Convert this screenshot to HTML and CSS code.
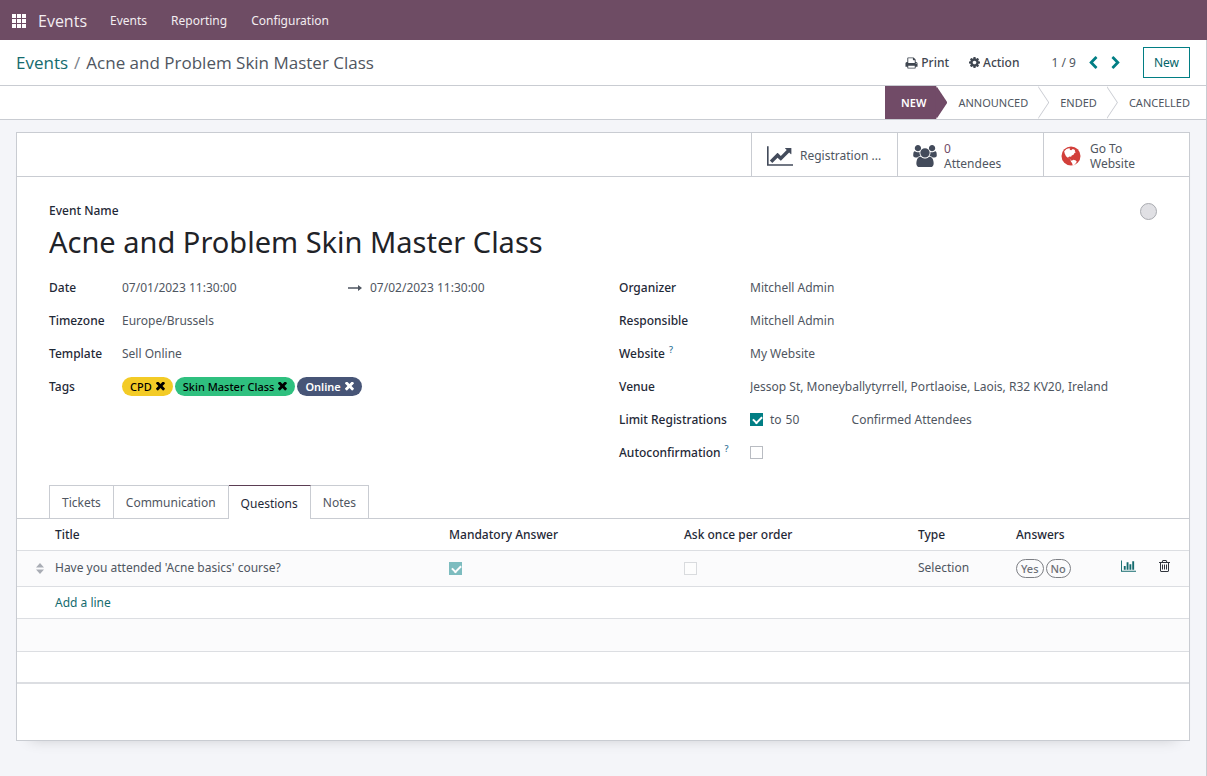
FILE: index.html
```html
<!DOCTYPE html>
<html lang="en">
<head>
<meta charset="utf-8">
<title>Events</title>
<link rel="stylesheet" href="styles.css">
</head>
<body>
<svg class="sprite" aria-hidden="true">
  <symbol id="times" viewBox="300 430 1200 1200"><path d="M1490 1322q0 40-28 68l-136 136q-28 28-68 28t-68-28l-294-294-294 294q-28 28-68 28t-68-28l-136-136q-28-28-28-68t28-68l294-294-294-294q-28-28-28-68t28-68l136-136q28-28 68-28t68 28l294 294 294-294q28-28 68-28t68 28l136 136q28 28 28 68t-28 68l-294 294 294 294q28 28 28 68z"/></symbol>
</svg>

<header class="navbar">
  <button class="apps" aria-label="Apps">
    <svg viewBox="0 0 14 14" width="14" height="14"><path d="M0 0h4v4H0zM5 0h4v4H5zM10 0h4v4h-4zM0 5h4v4H0zM5 5h4v4H5zM10 5h4v4h-4zM0 10h4v4H0zM5 10h4v4H5zM10 10h4v4h-4z"/></svg>
  </button>
  <a class="brand" href="#">Events</a>
  <nav class="menu">
    <a href="#">Events</a>
    <a href="#">Reporting</a>
    <a href="#">Configuration</a>
  </nav>
</header>

<div class="page">
  <div class="control-panel">
    <nav class="breadcrumb"><a href="#">Events</a><span class="slash">/</span><span>Acne and Problem Skin Master Class</span></nav>
    <div class="actions">
      <button class="action"><svg viewBox="0 128 1792 1536" width="13" height="12"><path d="M448 1536h896v-256h-896v256zm0-640h896v-384h-160q-40 0-68-28t-28-68v-160h-640v640zm1152 64q0-26-19-45t-45-19-45 19-19 45 19 45 45 19 45-19 19-45zm128 0v416q0 13-9.5 22.5t-22.5 9.5h-224v160q0 40-28 68t-68 28h-960q-40 0-68-28t-28-68v-160h-224q-13 0-22.5-9.5t-9.5-22.5v-416q0-79 56.5-135.5t135.5-56.5h64v-544q0-40 28-68t68-28h672q40 0 88 20t76 48l152 152q28 28 48 76t20 88v256h64q79 0 135.5 56.5t56.5 135.5z"/></svg>Print</button>
      <button class="action"><svg viewBox="128 128 1536 1536" width="11" height="11"><path d="M1152 896q0-106-75-181t-181-75-181 75-75 181 75 181 181 75 181-75 75-181zm512-109v222q0 12-8 23t-20 13l-185 28q-19 54-39 91 35 50 107 138 10 12 10 25t-9 23q-27 37-99 108t-94 71q-12 0-26-9l-138-108q-44 23-91 38-16 136-29 186-7 28-36 28h-222q-14 0-24.5-8.5t-11.5-21.5l-28-184q-49-16-90-37l-141 107q-10 9-25 9-14 0-25-11-126-114-165-168-7-10-7-23 0-12 8-23 15-21 51-66.5t54-70.5q-27-50-41-99l-183-27q-13-2-21-12.5t-8-23.5v-222q0-12 8-23t19-13l186-28q14-46 39-92-40-57-107-138-10-12-10-24 0-10 9-23 26-36 98.5-107.5t94.5-71.5q13 0 26 10l138 107q44-23 91-38 16-136 29-186 7-28 36-28h222q14 0 24.5 8.5t11.5 21.5l28 184q49 16 90 37l142-107q9-9 24-9 13 0 25 10 129 119 165 170 7 8 7 22 0 12-8 23-15 21-51 66.5t-54 70.5q26 50 41 98l183 28q13 2 21 12.5t8 23.5z"/></svg>Action</button>
    </div>
    <div class="pager">
      <span>1 / 9</span>
      <button aria-label="Previous"><svg viewBox="400 0 1100 1664" width="9" height="13"><path d="M1427 301l-531 531 531 531q19 19 19 45t-19 45l-166 166q-19 19-45 19t-45-19l-742-742q-19-19-19-45t19-45l742-742q19-19 45-19t45 19l166 166q19 19 19 45t-19 45z"/></svg></button>
      <button aria-label="Next"><svg viewBox="300 0 1100 1664" width="9" height="13"><path d="M1363 877l-742 742q-19 19-45 19t-45-19l-166-166q-19-19-19-45t19-45l531-531-531-531q-19-19-19-45t19-45l166-166q19-19 45-19t45 19l742 742q19 19 19 45t-19 45z"/></svg></button>
    </div>
    <button class="new">New</button>
  </div>

  <div class="statusbar">
    <button class="stage current">NEW</button>
    <button class="stage">ANNOUNCED</button>
    <button class="stage">ENDED</button>
    <button class="stage">CANCELLED</button>
  </div>

  <main class="sheet">
    <div class="stats">
      <button class="stat"><svg viewBox="0 128 2048 1536" width="26" height="20"><path d="M2048 1536v128h-2048v-1536h128v1408h1920zm-128-1248v435q0 21-19.5 29.5t-35.5-7.5l-121-121-633 633q-10 10-23 10t-23-10l-233-233-416 416-192-192 585-585q10-10 23-10t23 10l233 233 464-464-121-121q-16-16-7.5-35.5t29.5-19.5h435q14 0 23 9t9 23z"/></svg><span>Registration ...</span></button>
      <button class="stat"><svg viewBox="0 0 1920 1792" width="24" height="22"><path d="M593 896q-162 5-265 128h-134q-82 0-138-40.5t-56-118.5q0-353 124-353 6 0 43.5 21t97.5 42.5 119 21.5q67 0 133-23-5 37-5 66 0 139 81 256zm1071 637q0 120-73 189.5t-194 69.5h-874q-121 0-194-69.5t-73-189.5q0-53 3.5-103.5t14-109 26.5-108.5 43-97.5 62-81 85.5-53.5 111.5-20q10 0 43 21.5t73 48 107 48 135 21.5 135-21.5 107-48 73-48 43-21.5q61 0 111.5 20t85.5 53.5 62 81 43 97.5 26.5 108.5 14 109 3.5 103.5zm-1024-1277q0 106-75 181t-181 75-181-75-75-181 75-181 181-75 181 75 75 181zm704 384q0 159-112.5 271.5t-271.5 112.5-271.5-112.5-112.5-271.5 112.5-271.5 271.5-112.5 271.5 112.5 112.5 271.5zm576 225q0 78-56 118.5t-138 40.5h-134q-103-123-265-128 81-117 81-256 0-29-5-66 66 23 133 23 59 0 119-21.5t97.5-42.5 43.5-21q124 0 124 353zm-128-609q0 106-75 181t-181 75-181-75-75-181 75-181 181-75 181 75 75 181z"/></svg><span><span class="count">0</span><br>Attendees</span></button>
      <button class="stat"><svg class="globe" viewBox="0 0 20 20" width="20" height="20"><circle cx="10" cy="10" r="9.5"/><path class="land" d="M3.200 5.200 5.500 3 8 2.200l1.300.6L8.600 3.800l1.600.4L11.800 3l2.200 1-.2 1.300 1 .9-1.300.8-1 1.700-1.800.9-.6 1.200-1.500-.3-1.500.8.4 1.300 1.300.2.500 1.500 1.700.2 1.500-.8 2.300.7 1 1.300-1.200 1.800-1.500 1.700-1.300.4-.8-2.600-1.200-1.600.2-1.500L7.200 12 5 10.300 3.700 7.500z"/></svg><span>Go To<br>Website</span></button>
    </div>

    <div class="form">
      <div class="heading">
        <div class="name">
          <label for="name">Event Name</label>
          <input id="name" value="Acne and Problem Skin Master Class">
        </div>
        <button class="state" aria-label="Kanban state"></button>
      </div>
      <div class="groups">
        <div class="group left">
          <label for="date">Date</label>
          <div class="value dates">
            <input id="date" value="07/01/2023 11:30:00">
            <svg viewBox="0 0 14 8" width="14" height="8"><path d="M0 3.200h10V1L14 4 10 7V4.800H0z"/></svg>
            <input aria-label="End date" value="07/02/2023 11:30:00">
          </div>
          <label for="tz">Timezone</label>
          <div class="value"><input id="tz" value="Europe/Brussels"></div>
          <label for="tpl">Template</label>
          <div class="value"><input id="tpl" value="Sell Online"></div>
          <span class="label">Tags</span>
          <div class="value tags">
            <span class="tag yellow">CPD<button aria-label="Remove CPD"><svg width="9" height="9"><use href="#times"/></svg></button></span>
            <span class="tag green">Skin Master Class<button aria-label="Remove Skin Master Class"><svg width="9" height="9"><use href="#times"/></svg></button></span>
            <span class="tag navy">Online<button aria-label="Remove Online"><svg width="9" height="9"><use href="#times"/></svg></button></span>
          </div>
        </div>
        <div class="group right">
          <label for="org">Organizer</label>
          <div class="value"><input id="org" value="Mitchell Admin"></div>
          <label for="resp">Responsible</label>
          <div class="value"><input id="resp" value="Mitchell Admin"></div>
          <label for="site">Website<sup>?</sup></label>
          <div class="value"><input id="site" value="My Website"></div>
          <label for="venue">Venue</label>
          <div class="value"><input id="venue" value="Jessop St, Moneyballytyrrell, Portlaoise, Laois, R32 KV20, Ireland"></div>
          <label for="limit">Limit Registrations</label>
          <div class="value limit"><input type="checkbox" id="limit" checked><label for="seats">to</label><input id="seats" class="seats" value="50"><span>Confirmed Attendees</span></div>
          <label for="auto">Autoconfirmation<sup>?</sup></label>
          <div class="value"><input type="checkbox" id="auto"></div>
        </div>
      </div>
    </div>

    <div class="tabs" role="tablist">
      <button role="tab">Tickets</button>
      <button role="tab">Communication</button>
      <button role="tab" class="active" aria-selected="true">Questions</button>
      <button role="tab">Notes</button>
    </div>

    <table class="list">
      <colgroup><col class="c-handle"><col class="c-title"><col class="c-mandatory"><col class="c-once"><col class="c-type"><col class="c-answers"><col class="c-chart"><col class="c-trash"></colgroup>
      <thead>
        <tr><th></th><th>Title</th><th>Mandatory Answer</th><th>Ask once per order</th><th>Type</th><th>Answers</th><th></th><th></th></tr>
      </thead>
      <tbody>
        <tr class="record">
          <td class="handle"><svg viewBox="0 0 8 11" width="8" height="11"><path d="M4 0l4 4.500H0zM4 11L0 6.500h8z"/></svg></td>
          <td>Have you attended 'Acne basics' course?</td>
          <td><input type="checkbox" aria-label="Mandatory answer" checked disabled></td>
          <td><input type="checkbox" aria-label="Ask once per order" disabled></td>
          <td>Selection</td>
          <td><div class="answers"><span>Yes</span><span>No</span></div></td>
          <td class="icon"><button class="chart" aria-label="Statistics"><svg viewBox="0 128 2048 1536" width="15" height="12"><path d="M640 896v512h-256v-512h256zm384-512v1024h-256v-1024h256zm1024 1152v128h-2048v-1536h128v1408h1920zm-640-896v768h-256v-768h256zm384-384v1152h-256v-1152h256z"/></svg></button></td>
          <td class="icon"><button aria-label="Delete"><svg viewBox="192 128 1408 1536" width="11" height="12"><path d="M704 736v576q0 14-9 23t-23 9h-64q-14 0-23-9t-9-23v-576q0-14 9-23t23-9h64q14 0 23 9t9 23zm256 0v576q0 14-9 23t-23 9h-64q-14 0-23-9t-9-23v-576q0-14 9-23t23-9h64q14 0 23 9t9 23zm256 0v576q0 14-9 23t-23 9h-64q-14 0-23-9t-9-23v-576q0-14 9-23t23-9h64q14 0 23 9t9 23zm128 724v-948h-896v948q0 22 7 40.500t14.500 27 10.500 8.500h832q3 0 10.500-8.500t14.500-27 7-40.500zm-672-1076h448l-48-117q-7-9-17-11h-317q-10 2-17 11zm928 32v64q0 14-9 23t-23 9h-96v948q0 83-47 143.500t-113 60.500h-832q-66 0-113-58.500t-47-141.500v-952h-96q-14 0-23-9t-9-23v-64q0-14 9-23t23-9h309l70-167q15-37 54-63t79-26h320q40 0 79 26t54 63l70 167h309q14 0 23 9t9 23z"/></svg></button></td>
        </tr>
        <tr class="add"><td></td><td colspan="7"><a href="#">Add a line</a></td></tr>
        <tr class="striped"><td colspan="8"></td></tr>
        <tr class="last"><td colspan="8"></td></tr>
      </tbody>
    </table>
  </main>
</div>
</body>
</html>
```
FILE: styles.css
```css
* { box-sizing: border-box; }
body {
  margin: 0;
  min-height: 100vh;
  display: flex;
  flex-direction: column;
  background: #f4f5f9;
  color: #4f5661;
  font: 12px/16px "Noto Sans", "Open Sans", sans-serif;
}
button, input { font: inherit; color: inherit; margin: 0; padding: 0; border: 0; background: none; border-radius: 0; }
a { color: #146b6e; text-decoration: none; }
svg { fill: currentColor; flex: none; display: block; }
.sprite { position: absolute; width: 0; height: 0; }

.navbar { display: flex; align-items: center; height: 40px; padding: 1px 12px 0; background: #6e4c64; color: #f3edf1; }
.navbar a { color: inherit; }
.apps svg { fill: #fff; }
.brand { margin-left: 12px; font: 16px/20px "Open Sans", sans-serif; }
.menu { display: flex; gap: 24px; margin-left: 23px; }

.page { flex: 1; border-right: 1px solid #c9ccd2; }
.control-panel { display: flex; align-items: center; height: 46px; padding: 0 16px; background: #fff; border-bottom: 1px solid #c9ccd2; }
.breadcrumb { flex: 1; display: flex; gap: 6px; font: 17px/24px "Open Sans", sans-serif; }
.slash { color: #7b818a; }
.actions { display: flex; gap: 20px; font-weight: 500; }
.action { display: flex; align-items: center; gap: 3px; color: #3f4650; }
.pager { display: flex; align-items: center; gap: 13px; margin: 0 23px 0 32px; }
.pager button { color: #017e84; }
.new { height: 31px; padding: 0 10px; border: 1px solid #017e84; color: #016468; }

.statusbar { display: flex; justify-content: flex-end; height: 34px; background: #fff; border-bottom: 1px solid #c9ccd2; }
.stage { position: relative; padding: 0 10px 0 22px; font-size: 11px; }
.stage.current { padding-left: 16px; background: #714b67; color: #fff; font-weight: 600; }
.stage:last-child { padding-right: 16px; }
.stage:not(:last-child)::before, .stage:not(:last-child)::after {
  content: ""; position: absolute; z-index: 1; left: 100%; top: 0; width: 11px; height: 33px;
  background: #c9ccd2; clip-path: polygon(0 0, 100% 50%, 0 100%);
}
.stage:not(:last-child)::after { left: calc(100% - 1px); background: #fff; }
.stage.current:not(:last-child)::before, .stage.current:not(:last-child)::after { background: #714b67; }

.sheet { margin: 12px 16px 35px; background: #fff; border: 1px solid #c9ccd2; box-shadow: 0 12px 14px -14px rgba(0, 0, 0, .2); padding-bottom: 56px; }
.stats { display: flex; justify-content: flex-end; height: 44px; border-bottom: 1px solid #c9ccd2; }
.stat { display: flex; align-items: center; gap: 7px; width: 146px; padding: 2px 0 0 15px; border-left: 1px solid #c9ccd2; text-align: left; line-height: 15px; }
.stat svg { color: #434b5b; }
.stat .globe { fill: #d23f3a; margin: 0 2px; }
.globe .land { fill: #fff; }
.count { color: #714b67; }

.form { padding: 26px 32px 0; }
.heading { display: flex; justify-content: space-between; align-items: flex-start; }
label, .label { color: #1f2937; font-weight: 500; }
.name { flex: 1; display: flex; flex-direction: column; }
.name input { width: 100%; height: 44px; font-size: 29px; line-height: 40px; color: #1f2328; }
.state { width: 17px; height: 17px; border: 1px solid #a9abb0; border-radius: 50%; background: #e0e0e4; }
.groups { display: grid; grid-template-columns: 1fr 1fr; gap: 32px; margin-top: 8px; }
.group { display: grid; grid-auto-rows: 33px; align-content: start; align-items: center; }
.left { grid-template-columns: 73px 1fr; }
.right { grid-template-columns: 131px 1fr; }
.value { display: flex; align-items: center; }
.value input { flex: 1; min-width: 0; }
.dates { margin-right: -9px; }
.dates svg { margin-right: 8px; }
sup { margin-left: 4px; font-size: 9px; line-height: 1; color: #2b6f95; }
.tags { gap: 2px; }
.tag { display: flex; align-items: center; gap: 4px; height: 19px; padding: 0 8px; border-radius: 10px; font-size: 11px; color: #000; font-weight: 500; }
.tag button { display: flex; }
.yellow { background: #f3cb26; }
.green { background: #2fc07f; }
.navy { background: #475577; color: #fff; font-weight: 600; }

.value input[type=checkbox], .list input { flex: none; }
input[type=checkbox] { appearance: none; position: relative; display: block; width: 13px; height: 13px; border: 1px solid #b9bcc2; background: #fff; }
input[type=checkbox]:checked { border-color: #017e84; background: #017e84; }
input[type=checkbox]:checked::after { content: ""; position: absolute; left: 2px; top: 2px; width: 7px; height: 4px; border: solid #fff; border-width: 0 0 2px 2px; transform: rotate(-45deg); }
input[type=checkbox]:disabled { opacity: .5; }
.limit label { margin: 0 4px 0 7px; color: inherit; font-weight: 400; }
.value .seats { flex: none; width: 66px; }

.tabs { display: flex; padding-left: 32px; margin-top: 16px; border-bottom: 1px solid #c9ccd2; }
.tabs button { height: 33px; padding: 2px 12px 0; border: 1px solid #c9ccd2; border-width: 1px 1px 0 0; }
.tabs button:first-child { border-left-width: 1px; }
.tabs .active { height: 34px; margin-bottom: -1px; border-top-color: #5b3e54; background: #fff; color: #1f2937; }

.list { width: 100%; table-layout: fixed; border-collapse: collapse; }
.list th, .list td { height: 33px; padding: 0 0 0 4px; text-align: left; border-bottom: 1px solid #dcdee2; }
.list th { height: 31px; padding-top: 2px; color: #1f2937; font-weight: 500; }
.list .record td { height: 36px; }
.list .add td { height: 32px; padding-top: 2px; }
.list .last td { height: 32px; border-bottom: 2px solid #dcdee2; }
.record, .striped { background: #fbfbfc; }
.c-handle { width: 34px; }
.c-mandatory { width: 235px; }
.c-once { width: 234px; }
.c-type { width: 98px; }
.c-answers { width: 105px; }
.c-chart { width: 38px; }
.c-trash { width: 34px; }
.list .handle { padding-left: 19px; color: #a9adb5; }
.answers { display: flex; gap: 2px; }
.answers span { height: 19px; padding: 0 4px; border: 1px solid #7d7f84; border-radius: 10px; font-size: 11px; line-height: 17px; color: #6d7076; font-weight: 500; }
.icon button { color: #30353d; }
.icon .chart { color: #146b6e; }
```
